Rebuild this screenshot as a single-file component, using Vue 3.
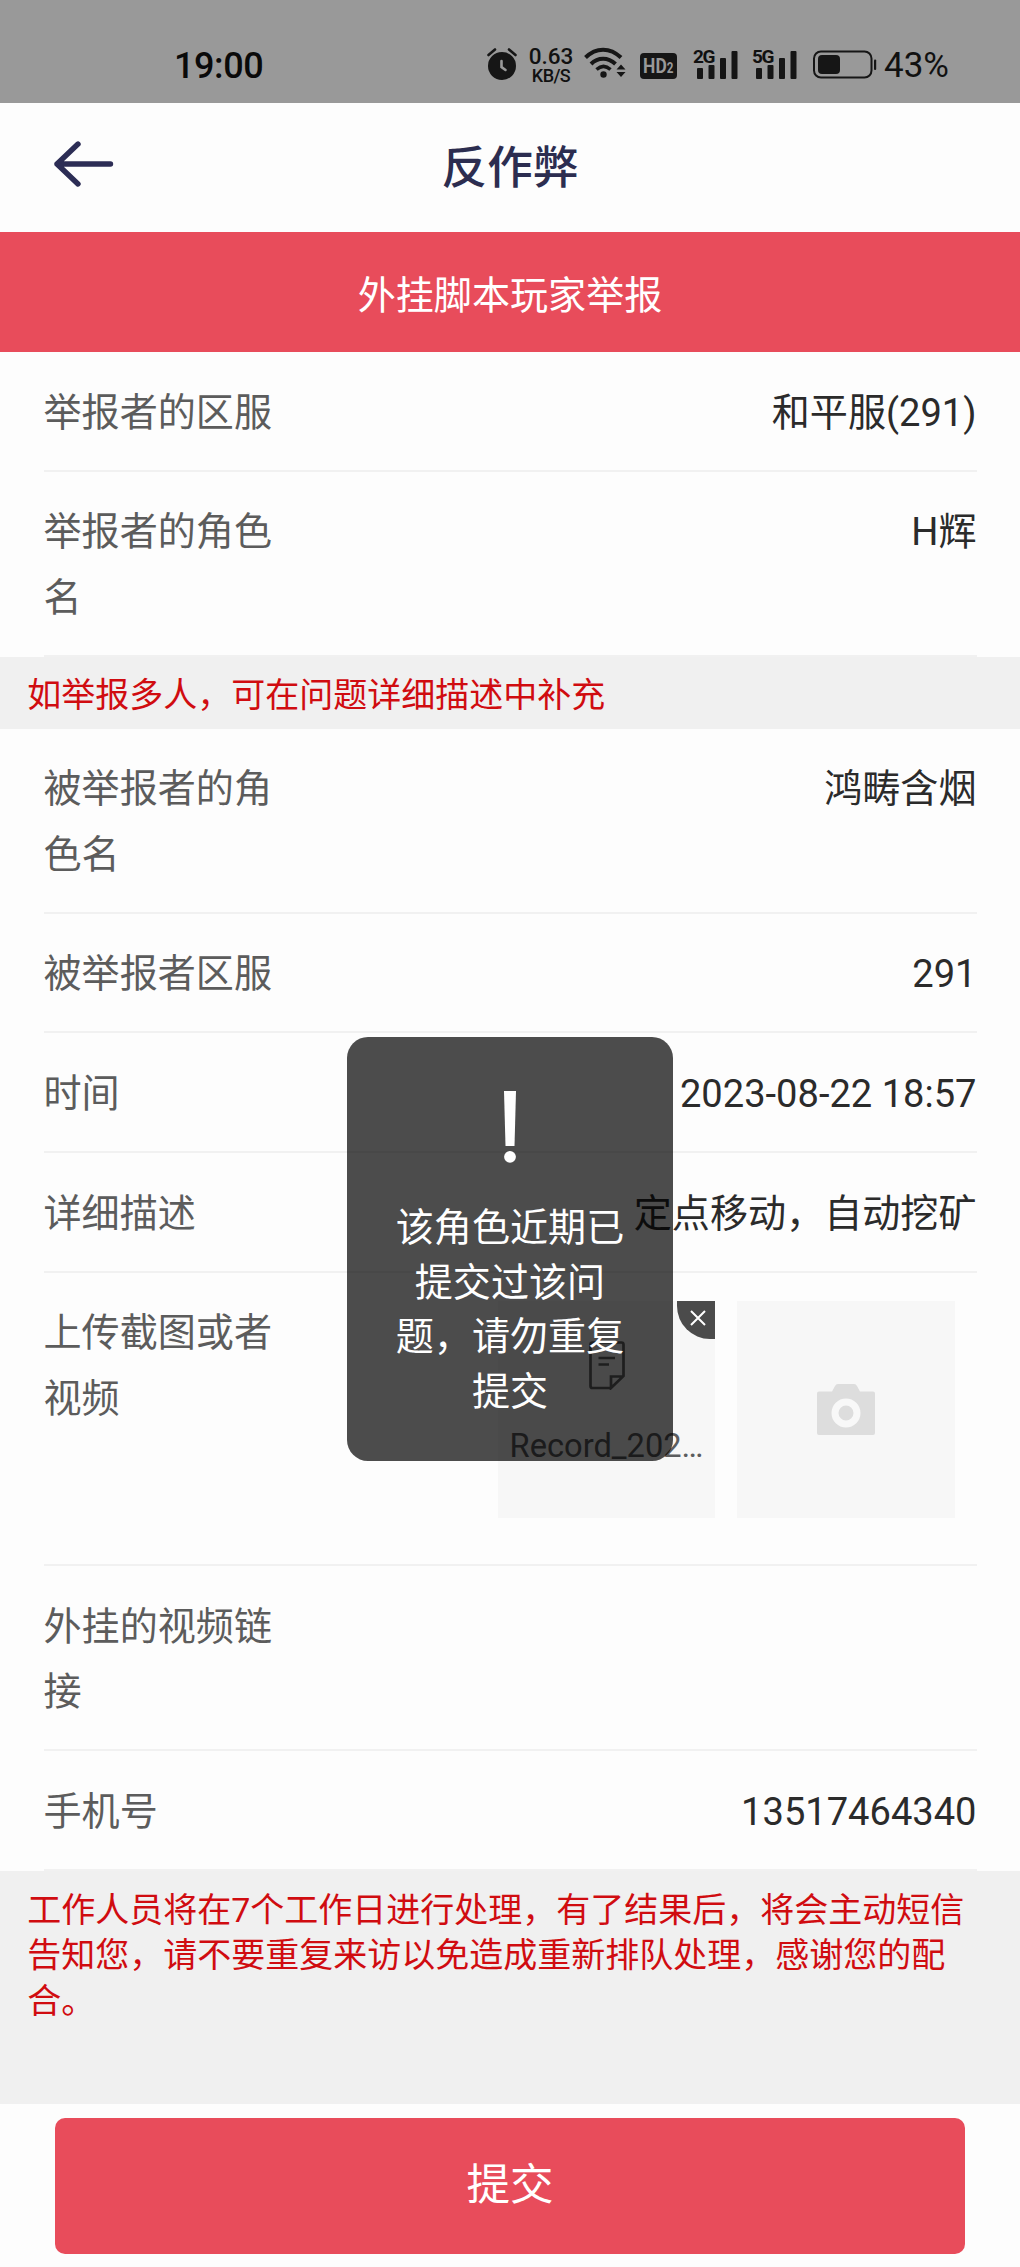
<script setup>
const reporter = [
  { label: '举报者的区服', value: '和平服(291)' },
  { label: '举报者的角色名', value: 'H辉' },
]
const reported = [
  { label: '被举报者的角色名', value: '鸿畴含烟' },
  { label: '被举报者区服', value: '291' },
  { label: '时间', value: '2023-08-22 18:57' },
  { label: '详细描述', value: '定点移动，自动挖矿' },
  { label: '上传截图或者视频', upload: true },
  { label: '外挂的视频链接', value: '' },
  { label: '手机号', value: '13517464340' },
]
const toastLines = ['该角色近期已', '提交过该问', '题，请勿重复', '提交']
const networks = ['2G', '5G']
</script>

<template>
  <div class="page">
    <div class="status">
      <span class="clock">19:00</span>
      <div class="tray">
        <svg class="alarm" width="30" height="34" viewBox="0 0 30 34">
          <circle cx="15" cy="19" r="14" fill="#161616" />
          <path d="M1.5 8 8 2.5M28.500 8 22 2.500" stroke="#161616" stroke-width="2.600" stroke-linecap="round" />
          <path d="M14.500 14v6l4 3" fill="none" stroke="#999" stroke-width="2.600" stroke-linecap="round" />
        </svg>
        <div class="speed"><span class="rate">0.63</span><span class="unit">KB/S</span></div>
        <svg class="wifi" width="42" height="34" viewBox="0 0 42 34">
          <g fill="none" stroke="#161616" stroke-width="4">
            <path d="M1.500 11.500C12 1 26 1 37 11.500" />
            <path d="M7 18C14 11 24 11 31.500 18" />
            <path d="M12.500 23.500C17 19.500 22 19.500 26.500 23.500" stroke-width="3.500" />
          </g>
          <circle cx="19.500" cy="28.500" r="3.200" fill="#161616" />
          <path d="M32.500 23.500 37 18.500l4.500 5zM32.500 26 37 31l4.500-5z" fill="#161616" />
        </svg>
        <div class="hd"><span>HD<small>2</small></span></div>
        <div v-for="n in networks" :key="n" class="signal">
          <span>{{ n }}</span>
          <svg width="42" height="30" viewBox="0 0 42 30" fill="#161616">
            <rect x="0" y="18" width="6" height="11" rx="1" />
            <rect x="11.500" y="15" width="6" height="14" rx="1" />
            <rect x="23" y="8" width="6" height="21" rx="1" />
            <rect x="34.500" y="1" width="6" height="28" rx="1" />
          </svg>
        </div>
        <svg class="battery" width="64" height="30" viewBox="0 0 64 30">
          <rect x="1" y="1.500" width="57.500" height="26" rx="7" fill="none" stroke="#161616" stroke-width="2" />
          <rect x="5" y="5" width="22" height="19" rx="4" fill="#161616" />
          <rect x="61" y="9.500" width="2.200" height="10.500" rx="1" fill="#161616" />
        </svg>
        <span class="percent">43%</span>
      </div>
    </div>

    <header class="nav">
      <svg class="back" width="62" height="48" viewBox="0 0 62 48" fill="none" stroke="#2c2d55" stroke-width="5.400" stroke-linecap="round" stroke-linejoin="round">
        <path d="M25 4 4 24 25 44M4 24H57.500" />
      </svg>
      <h1>反作弊</h1>
    </header>

    <div class="banner">外挂脚本玩家举报</div>

    <section class="group">
      <div v-for="f in reporter" :key="f.label" class="row">
        <div class="label">{{ f.label }}</div>
        <div class="value">{{ f.value }}</div>
      </div>
    </section>

    <p class="notice short">如举报多人，可在问题详细描述中补充</p>

    <section class="group">
      <div v-for="f in reported" :key="f.label" class="row">
        <div class="label">{{ f.label }}</div>
        <div v-if="f.upload" class="uploads">
          <div class="tile file">
            <svg width="36" height="49" viewBox="0 0 36 49" fill="none" stroke="#646566" stroke-width="2.700">
              <path d="M22 47H3.500Q1.500 47 1.500 45V3.500Q1.500 1.500 3.500 1.500H32.500Q34.500 1.500 34.500 3.500V35L22 47V35.500H34.500M9.500 17H26M9.500 23.500H20" />
            </svg>
            <span class="name">Record_202…</span>
            <div class="remove">
              <svg width="16" height="16" viewBox="0 0 16 16" stroke="#fff" stroke-width="2"><path d="M1 1 15 15M15 1 1 15" /></svg>
            </div>
          </div>
          <div class="tile add">
            <svg width="58" height="51" viewBox="0 0 58 51">
              <path d="M2 7.500H15L18 2Q19 0 21 0H37Q39 0 40 2L43 7.500H56Q58 7.500 58 9.500V49Q58 51 56 51H2Q0 51 0 49V9.500Q0 7.500 2 7.500Z" fill="#dddddd" />
              <circle cx="29" cy="29" r="11" fill="#dddddd" stroke="#f8f8f8" stroke-width="7" />
            </svg>
          </div>
        </div>
        <div v-else class="value">{{ f.value }}</div>
      </div>
    </section>

    <p class="notice long">工作人员将在7个工作日进行处理，有了结果后，将会主动短信告知您，请不要重复来访以免造成重新排队处理，感谢您的配合。</p>

    <footer><button type="button">提交</button></footer>

    <div class="toast">
      <svg width="12" height="72" viewBox="0 0 12 72" fill="#fff">
        <path d="M0 0H12L10.500 55H1.500Z" />
        <circle cx="6" cy="65.800" r="5.900" />
      </svg>
      <div class="message"><div v-for="line in toastLines" :key="line">{{ line }}</div></div>
    </div>
  </div>
</template>

<style>
body { margin: 0; background: #fdfdfd; }
</style>

<style scoped>
.page {
  position: relative;
  width: 1020px;
  height: 2267px;
  overflow: hidden;
  background: #fdfdfd;
  font-family: Roboto, "Noto Sans CJK SC", sans-serif;
  font-size: 38.08px;
}
.status {
  display: flex;
  justify-content: space-between;
  box-sizing: border-box;
  height: 103px;
  padding: 46px 69px 0 174px;
  background: #999;
  color: #111;
}
.clock { padding-top: 1px; font-size: 36px; line-height: 38px; font-weight: 500; letter-spacing: -0.4px; color: #0a0a0a; }
.tray { display: flex; align-items: flex-start; height: 40px; }
.alarm { margin: 1px 11px 0 0; }
.speed { display: flex; flex-direction: column; align-items: center; width: 46px; margin-right: 10px; font-weight: 500; }
.rate { font-size: 22.500px; line-height: 21px; }
.unit { font-size: 18px; line-height: 18px; letter-spacing: -0.6px; }
.wifi { margin-right: 14px; }
.hd {
  display: flex;
  justify-content: center;
  width: 37px;
  height: 26px;
  margin: 7px 20px 0 0;
  border-radius: 4px;
  background: #161616;
  color: #999;
  font: 700 21px/27px "Roboto", sans-serif;
}
.hd span { flex: none; transform: scaleX(0.83); }
.hd small { font-size: 14px; }
.signal { position: relative; width: 42px; margin-right: 17px; padding-top: 4px; height: 30px; }
.signal svg { display: block; }
.signal span { position: absolute; left: -4px; top: 2px; font-size: 19px; line-height: 18px; font-weight: 700; letter-spacing: -1.400px; }
.battery { margin: 4px 7px 0 -2px; }
.percent { width: 67px; padding-top: 1px; font-size: 35px; line-height: 38px; }

.nav { display: flex; align-items: center; justify-content: center; position: relative; height: 129px; }
.back { position: absolute; left: 53px; top: 37px; }
h1 { margin: 2px 0 0; font-size: 45.600px; line-height: 60px; font-weight: 500; color: #2c2d50; }
.banner {
  box-sizing: border-box;
  height: 120px;
  padding-top: 8px;
  background: #e84c5b;
  color: #fff;
  line-height: 112px;
  text-align: center;
}
.group { padding: 0 43.500px; }
.row {
  display: flex;
  justify-content: space-between;
  box-sizing: border-box;
  padding: 28.700px 0 23.700px;
  border-bottom: 2px solid #f1f1f1;
  line-height: 65.300px;
}
.label { width: 236px; color: #5c5c5c; }
.value { color: #2b2b2b; text-align: right; }
.notice { margin: 0; padding: 0 27.200px; background: #f0f0f0; color: #d00c10; font-size: 34px; }
.short { height: 72px; line-height: 76px; }
.long { box-sizing: border-box; height: 233px; padding-top: 17px; line-height: 45.300px; }

.uploads { display: flex; gap: 21.800px; margin: -0.500px 21.800px 22.300px 0; }
.tile {
  position: relative;
  display: flex;
  flex-direction: column;
  align-items: center;
  width: 217.600px;
  height: 217.600px;
  background: #f7f7f7;
}
.file svg { flex: none; }
.file > svg { margin-top: 40px; }
.name { margin-top: 36.500px; font-size: 32.640px; line-height: 40px; color: #5c5d5e; }
.add { justify-content: center; }
.remove {
  position: absolute;
  top: 0;
  right: 0;
  display: flex;
  align-items: center;
  justify-content: center;
  width: 34px;
  height: 34px;
  padding: 0 0 4px 4px;
  border-radius: 0 0 0 33px;
  background: #4b4b4b;
}
footer { padding: 14px 55px 0; }
button {
  display: block;
  width: 100%;
  height: 136px;
  padding: 0;
  border: 0;
  border-radius: 10px;
  background: #e84c5b;
  color: #fff;
  font: 400 43.500px/60px Roboto, "Noto Sans CJK SC", sans-serif;
}
.toast {
  position: absolute;
  left: 347px;
  top: 1037px;
  display: flex;
  flex-direction: column;
  align-items: center;
  box-sizing: border-box;
  width: 326px;
  height: 424px;
  padding-top: 54px;
  border-radius: 21px;
  background: rgba(0, 0, 0, 0.7);
  color: #fff;
}
.message { margin-top: 38px; text-align: center; line-height: 54.600px; white-space: nowrap; }
</style>
